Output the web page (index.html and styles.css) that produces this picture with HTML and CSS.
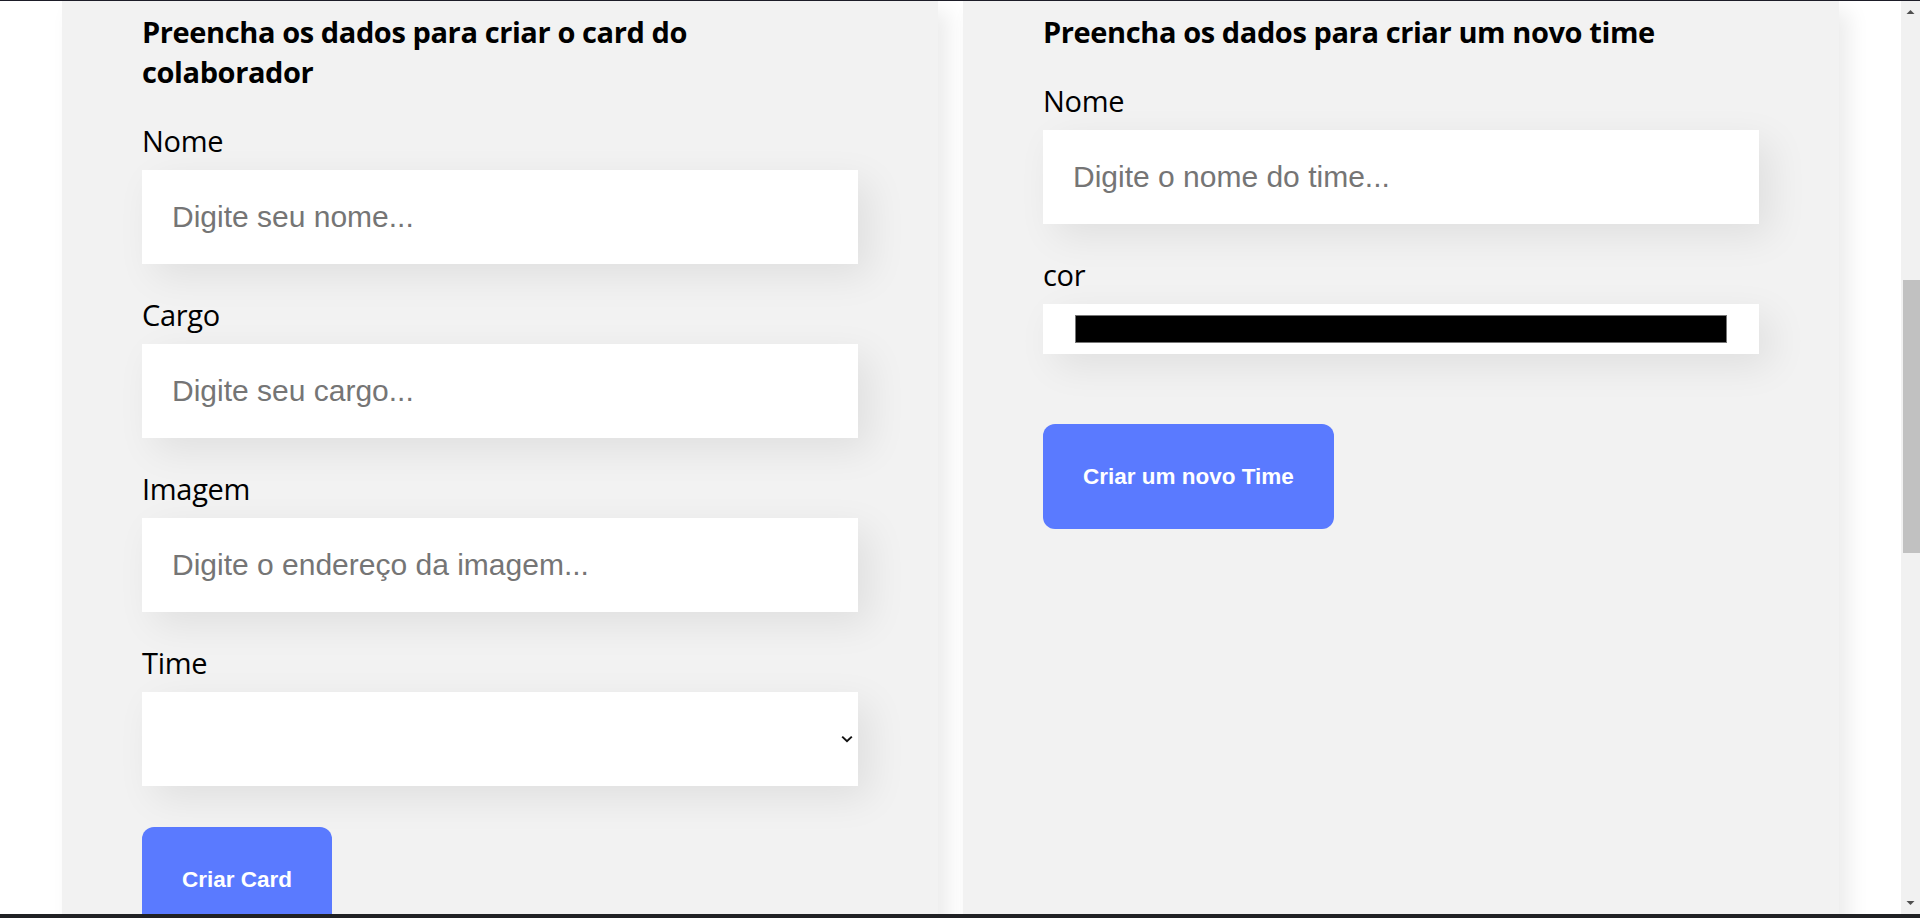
FILE: index.html
```html
<!DOCTYPE html>
<html lang="pt-BR">
<head>
<meta charset="utf-8">
<title>Organo</title>
<link rel="stylesheet" href="styles.css">
</head>
<body>
<div class="window">
  <div class="viewport">
    <main class="page">
      <section class="forms">
        <form class="form">
          <h2 class="form-title">Preencha os dados para criar o card do colaborador</h2>
          <div class="field">
            <label class="field-label" for="nome">Nome</label>
            <input class="field-input" id="nome" type="text" placeholder="Digite seu nome...">
          </div>
          <div class="field">
            <label class="field-label" for="cargo">Cargo</label>
            <input class="field-input" id="cargo" type="text" placeholder="Digite seu cargo...">
          </div>
          <div class="field">
            <label class="field-label" for="imagem">Imagem</label>
            <input class="field-input" id="imagem" type="text" placeholder="Digite o endereço da imagem...">
          </div>
          <div class="field">
            <label class="field-label" for="time">Time</label>
            <div class="select-wrap">
              <select class="field-select" id="time"><option value=""></option></select>
              <svg class="select-arrow" width="12" height="8" viewBox="0 0 12 8" aria-hidden="true"><path d="M1.2 1.6 L6 6.2 L10.8 1.6" fill="none" stroke="#111" stroke-width="2"/></svg>
            </div>
          </div>
          <button class="button button-card" type="button">Criar Card</button>
        </form>
        <form class="form">
          <h2 class="form-title">Preencha os dados para criar um novo time</h2>
          <div class="field">
            <label class="field-label" for="nome-time">Nome</label>
            <input class="field-input" id="nome-time" type="text" placeholder="Digite o nome do time...">
          </div>
          <div class="field">
            <label class="field-label" for="cor">cor</label>
            <input class="field-color" id="cor" type="color" value="#000000">
          </div>
          <button class="button button-team" type="button">Criar um novo Time</button>
        </form>
      </section>
    </main>
    <div class="scrollbar">
      <div class="scroll-btn">
        <svg width="19" height="17" viewBox="0 0 19 17" aria-hidden="true"><path d="M5.5 13 L9.5 9 L13.5 13 Z" fill="#505050"/></svg>
      </div>
      <div class="scroll-thumb"></div>
      <div class="scroll-btn scroll-btn-down">
        <svg width="19" height="17" viewBox="0 0 19 17" aria-hidden="true"><path d="M5.5 4 L9.5 8 L13.5 4 Z" fill="#505050"/></svg>
      </div>
    </div>
  </div>
  <div class="frame-bottom"></div>
</div>
</body>
</html>
```

FILE: styles.css
```css
* {
  box-sizing: border-box;
}

html, body {
  margin: 0;
  padding: 0;
  height: 918px;
  overflow: hidden;
  background: #ffffff;
}

body {
  font-family: "Open Sans", "Noto Sans", sans-serif;
  color: #000000;
}

.window {
  height: 918px;
  display: flex;
  flex-direction: column;
  border-top: 1px solid #1d1d28;
}

.viewport {
  flex: 1;
  display: flex;
  min-height: 0;
}

.page {
  flex: 1;
  overflow: hidden;
  background: #ffffff;
}

.forms {
  display: flex;
  justify-content: center;
  align-items: stretch;
  gap: 25px;
}

.form {
  width: 876px;
  background: #f2f2f2;
  padding: 11px 80px 40px;
  box-shadow: 10px 10px 20px rgba(0, 0, 0, 0.08);
}

.form-title {
  margin: 0;
  font-size: 29px;
  letter-spacing: -0.4px;
  line-height: 40px;
  font-weight: 700;
}

.field {
  margin-top: 30px;
}

.form-title + .field {
  margin-top: 28px;
}

.field-label {
  display: block;
  font-size: 29px;
  letter-spacing: -0.3px;
  line-height: 40px;
  padding-top: 1px;
  margin-bottom: 9px;
}

.field-input,
.field-select {
  display: block;
  width: 100%;
  height: 94px;
  padding: 30px;
  border: none;
  outline: none;
  background: #ffffff;
  font-family: "Liberation Sans", Arial, sans-serif;
  font-size: 30px;
  color: #000000;
  box-shadow: 12px 12px 38px rgba(0, 0, 0, 0.08);
}

.field-input::placeholder {
  color: #757575;
}

.select-wrap {
  position: relative;
}

.field-select {
  appearance: none;
  -webkit-appearance: none;
  border-radius: 0;
}

.select-arrow {
  position: absolute;
  right: 5px;
  top: 43px;
}

.field-color {
  display: block;
  width: 100%;
  height: 50px;
  padding: 0;
  border: none;
  background: #ffffff;
  box-shadow: 12px 12px 38px rgba(0, 0, 0, 0.08);
  -webkit-appearance: none;
  appearance: none;
  cursor: pointer;
}

.field-color::-webkit-color-swatch-wrapper {
  padding: 11px 32px;
}

.field-color::-webkit-color-swatch {
  border: 1px solid #767676;
  border-radius: 0;
}

.button {
  display: block;
  width: fit-content;
  padding: 40px;
  border: none;
  border-radius: 12px;
  background: #5a7aff;
  color: #ffffff;
  font-family: "Liberation Sans", Arial, sans-serif;
  font-size: 22.5px;
  font-weight: 700;
  line-height: 25px;
  cursor: pointer;
}

.button-card {
  margin-top: 41px;
}

.button-team {
  margin-top: 70px;
}

.scrollbar {
  width: 19px;
  background: #f1f1f1;
  display: flex;
  flex-direction: column;
}

.scroll-btn {
  height: 17px;
  display: flex;
}

.scroll-btn-down {
  margin-top: auto;
}

.scroll-thumb {
  margin-top: 262px;
  margin-left: 2px;
  height: 273px;
  background: #c1c1c1;
}

.frame-bottom {
  height: 4px;
  background: #202124;
}
```
